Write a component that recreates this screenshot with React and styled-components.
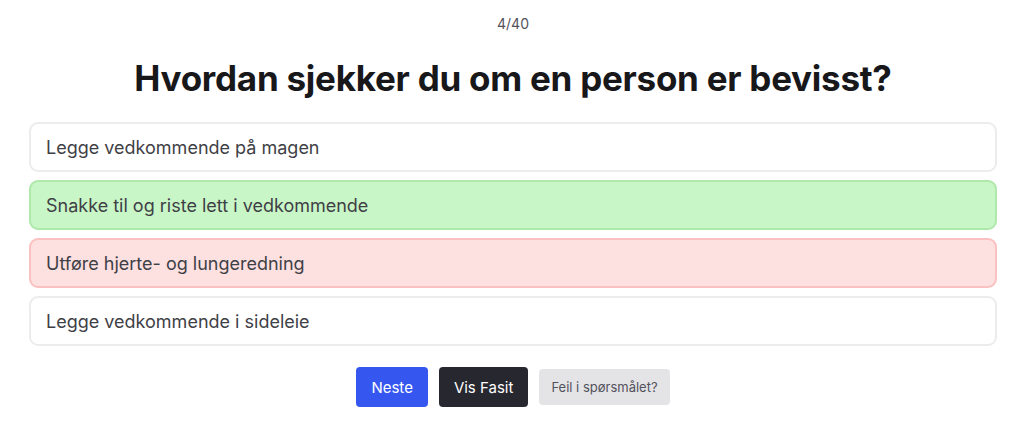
import React from 'react';
import styled, { createGlobalStyle } from 'styled-components';

const GlobalStyle = createGlobalStyle`
  body {
    margin: 0;
    background: #ffffff;
    font-family: 'Inter', 'Liberation Sans', sans-serif;
  }
`;

const Page = styled.div`
  padding: 14px 27px 0 29px;
  display: flex;
  flex-direction: column;
  align-items: center;
`;

const Counter = styled.div`
  font-size: 14px;
  color: #52525b;
  line-height: 20px;
`;

const Title = styled.h1`
  margin: 22px 0 22px;
  font-size: 35px;
  line-height: 44px;
  font-weight: 700;
  color: #18181b;
  letter-spacing: -0.25px;
`;

const List = styled.div`
  width: 100%;
  display: flex;
  flex-direction: column;
  gap: 8px;
`;

const variants = {
  neutral: { bg: '#ffffff', border: '#ececee' },
  correct: { bg: '#c9f6c6', border: '#aee8aa' },
  wrong: { bg: '#fde0e0', border: '#fbc0c0' },
};

const Option = styled.div`
  height: 50px;
  box-sizing: border-box;
  display: flex;
  align-items: center;
  padding: 0 15px;
  border-radius: 9px;
  border: 2px solid ${(p) => variants[p.$state].border};
  background: ${(p) => variants[p.$state].bg};
  font-size: 18px;
  color: #3f3f46;
`;

const Actions = styled.div`
  margin-top: 21px;
  display: flex;
  align-items: center;
  gap: 11px;
`;

const Button = styled.button`
  border: none;
  border-radius: 4px;
  font-family: inherit;
  cursor: pointer;
  height: ${(p) => (p.$small ? '36px' : '40px')};
  padding: ${(p) => (p.$small ? '0 12px' : '0 15px')};
  font-size: ${(p) => (p.$small ? '13px' : '15px')};
  background: ${(p) => p.$bg};
  color: ${(p) => p.$color};
`;

const options = [
  { text: 'Legge vedkommende på magen', state: 'neutral' },
  { text: 'Snakke til og riste lett i vedkommende', state: 'correct' },
  { text: 'Utføre hjerte- og lungeredning', state: 'wrong' },
  { text: 'Legge vedkommende i sideleie', state: 'neutral' },
];

const App = () => {
  return (
    <>
      <GlobalStyle />
      <Page>
        <Counter>4/40</Counter>
        <Title>Hvordan sjekker du om en person er bevisst?</Title>
        <List>
          {options.map((o) => (
            <Option key={o.text} $state={o.state}>
              {o.text}
            </Option>
          ))}
        </List>
        <Actions>
          <Button $bg="#3557f0" $color="#ffffff">Neste</Button>
          <Button $bg="#27272f" $color="#ffffff">Vis Fasit</Button>
          <Button $small $bg="#e4e4e7" $color="#52525b">Feil i spørsmålet?</Button>
        </Actions>
      </Page>
    </>
  );
};

export default App;
